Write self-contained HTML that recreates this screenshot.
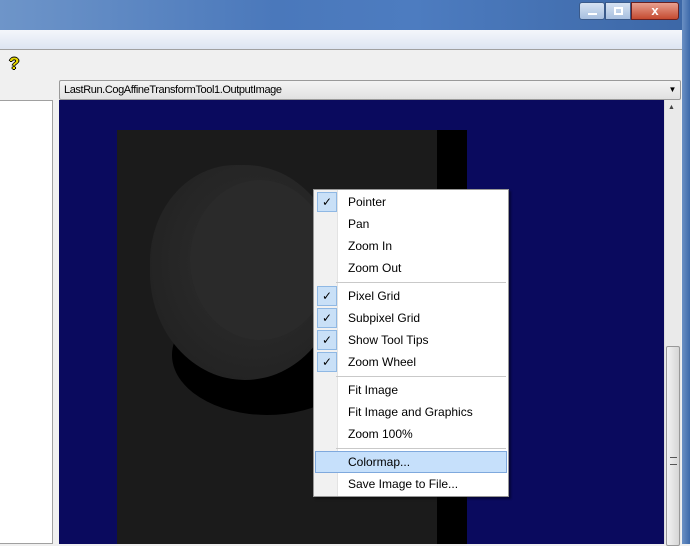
<!DOCTYPE html><html><head><style>
body{margin:0;width:690px;height:544px;overflow:hidden;position:relative;background:#f0f0f0;font-family:"Liberation Sans",sans-serif}
div{position:absolute;box-sizing:border-box}
.mi{left:34px;font-size:12px;color:#000;height:22px;line-height:22px}
.ck{left:3px;width:20px;height:20px;background:#c9e0f7;border:1px solid #8fb8e4;font-size:12px;text-align:center;line-height:18px}
.sep{left:22px;right:2px;height:1px;background:#c9c9c9}
</style></head><body>
<div style="left:0;top:0;width:690px;height:30px;background:linear-gradient(90deg,#6e95c9,#4a78bb 40%,#4d7cc0 60%,#3c67a6)"></div>
<div style="left:579px;top:2px;width:26px;height:18px;border:1px solid #3a5a8a;border-radius:3px;background:linear-gradient(#d6e2f2,#a7bfdf)"><div style="left:8px;top:10px;width:9px;height:2px;background:#fff"></div></div>
<div style="left:605px;top:2px;width:26px;height:18px;border:1px solid #3a5a8a;background:linear-gradient(#d6e2f2,#a7bfdf)"><div style="left:8px;top:4px;width:9px;height:8px;border:2px solid #fff"></div></div>
<div style="left:631px;top:2px;width:48px;height:18px;border:1px solid #6a2020;border-radius:0 3px 3px 0;background:linear-gradient(#e8a090,#c44a30);color:#fff;font-weight:bold;font-size:13px;text-align:center;line-height:16px">x</div>
<div style="left:0;top:30px;width:682px;height:20px;background:linear-gradient(#f4f6fb,#dde5f2);border-bottom:1px solid #a0a0a0"></div>
<div style="left:682px;top:0;width:8px;height:544px;background:linear-gradient(90deg,#6b90c4,#3d6aaa)"></div>
<div style="left:9px;top:54px;font-size:17px;font-weight:bold;color:#e8d800;text-shadow:1px 0 #000,-1px 0 #000,0 1px #000,0 -1px #000">?</div>
<div style="left:0;top:100px;width:53px;height:444px;background:#fff;border:1px solid #a0a0a0;border-left:none"></div>
<div style="left:59px;top:80px;width:622px;height:20px;border:1px solid #9a9a9a;border-radius:2px;background:linear-gradient(#f4f4f4,#e1e1e1);font-size:11px;line-height:18px;padding-left:4px;letter-spacing:-0.4px">LastRun.CogAffineTransformTool1.OutputImage<span style="position:absolute;right:4px;font-size:8px">▼</span></div>
<div style="left:59px;top:100px;width:605px;height:444px;background:#0a0a5e"></div>
<div style="left:664px;top:100px;width:17px;height:444px;background:#eaeaea;border-left:1px solid #ddd"><div style="left:3px;top:4px;font-size:7px;color:#444">▲</div><div style="left:1px;top:246px;width:14px;height:200px;border:1px solid #999;border-radius:2px;background:linear-gradient(90deg,#f2f2f2,#d6d6d6)"><div style="left:3px;top:110px;width:7px;height:8px;border-top:1px solid #555;border-bottom:1px solid #555"></div></div></div>
<div style="left:117px;top:130px;width:350px;height:414px;background:#1b1b1b"></div>
<div style="left:437px;top:130px;width:30px;height:414px;background:#000"></div>
<div style="left:172px;top:295px;width:190px;height:120px;border-radius:50%;background:#000"></div>
<div style="left:150px;top:165px;width:190px;height:215px;border-radius:45% 50% 50% 50%;background:radial-gradient(ellipse at 55% 45%,#2e2e2e,#262626 55%,#1e1e1e)"></div>
<div style="left:190px;top:180px;width:140px;height:160px;border-radius:50%;background:#2a2a2a"></div>
<div style="left:313px;top:189px;width:196px;height:308px;background:#fff;border:1px solid #979797;box-shadow:2px 2px 2px rgba(0,0,0,.4)">
<div style="left:0;top:0;width:24px;height:306px;background:#f1f1f1;border-right:1px solid #e3e3e3"></div>
<div class="ck" style="top:2px">✓</div><div class="mi" style="top:1px">Pointer</div>
<div class="mi" style="top:23px">Pan</div>
<div class="mi" style="top:45px">Zoom In</div>
<div class="mi" style="top:67px">Zoom Out</div>
<div class="sep" style="top:92px"></div>
<div class="ck" style="top:96px">✓</div><div class="mi" style="top:95px">Pixel Grid</div>
<div class="ck" style="top:118px">✓</div><div class="mi" style="top:117px">Subpixel Grid</div>
<div class="ck" style="top:140px">✓</div><div class="mi" style="top:139px">Show Tool Tips</div>
<div class="ck" style="top:162px">✓</div><div class="mi" style="top:161px">Zoom Wheel</div>
<div class="sep" style="top:186px"></div>
<div class="mi" style="top:189px">Fit Image</div>
<div class="mi" style="top:211px">Fit Image and Graphics</div>
<div class="mi" style="top:233px">Zoom 100%</div>
<div class="sep" style="top:258px"></div>
<div style="left:1px;top:261px;width:192px;height:22px;background:#c6e0fb;border:1px solid #7fa9dd"></div>
<div class="mi" style="top:261px">Colormap...</div>
<div class="mi" style="top:283px">Save Image to File...</div>
</div>
</body></html>
